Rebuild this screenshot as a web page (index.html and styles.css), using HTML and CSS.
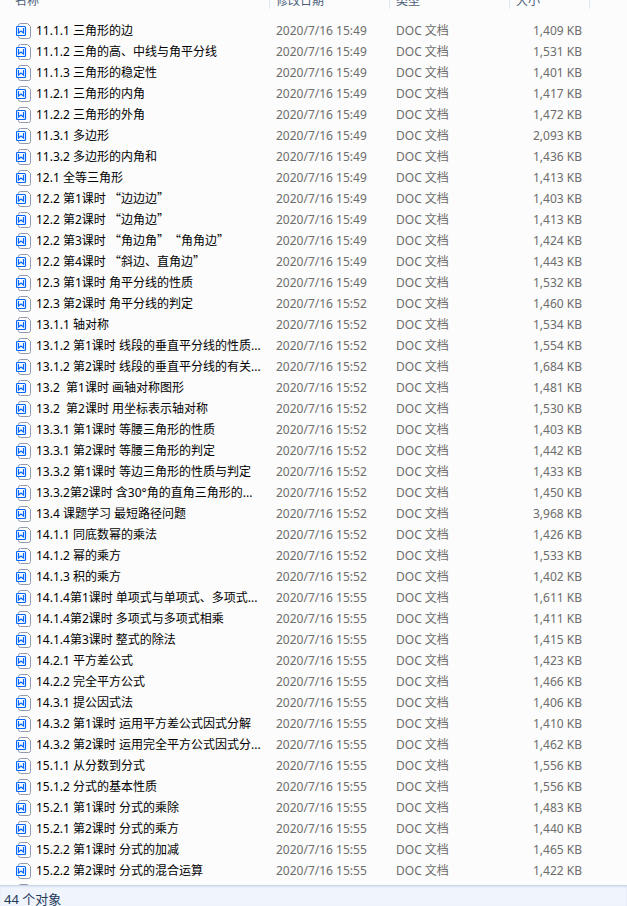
FILE: index.html
```html
<!DOCTYPE html>
<html lang="zh-CN">
<head>
    <meta charset="UTF-8">
    <meta name="viewport" content="width=device-width, initial-scale=1.0">
    <title>文件列表</title>
    <link rel="stylesheet" href="styles.css">
</head>
<body>
    <svg class="sprite" aria-hidden="true">
        <symbol id="doc-icon" viewBox="0 0 15 16">
            <path d="M2.5 2.5 Q2.5 .5 4.5 .5 H11.5 L14.5 3.5 V13.5 Q14.5 15.5 12.5 15.5 H4.5 Q2.5 15.5 2.5 13.5 Z" fill="#fff" stroke="#9299ad"/>
            <rect x=".5" y="3.5" width="9" height="9" rx="1" fill="#fff" stroke="#0066ff" stroke-width="1.2"/>
            <path d="M2.5 5 V10 L5 8 L7.5 10 V5" fill="none" stroke="#0066ff" stroke-width="1.2"/>
        </symbol>
    </svg>

    <div class="file-list">
        <table class="files">
            <colgroup>
                <col class="col-name">
                <col class="col-date">
                <col class="col-type">
                <col class="col-size">
                <col>
            </colgroup>
            <thead>
                <tr>
                    <th><div class="heading">名称</div></th>
                    <th><div class="heading">修改日期</div></th>
                    <th><div class="heading">类型</div></th>
                    <th><div class="heading">大小</div></th>
                    <td></td>
                </tr>
            </thead>
            <tbody id="file-rows"></tbody>
        </table>
    </div>

    <div class="status-bar">44 个对象</div>

    <script src="files.js"></script>
</body>
</html>
```
FILE: styles.css
```css
body {
    font-family: "Noto Sans", "Noto Sans CJK SC", sans-serif;
    font-size: 12px;
    margin: 0;
    height: 100vh;
    overflow: hidden;
    display: flex;
    flex-direction: column;
    background-color: #fcfcfc;
    color: #000;
}

.sprite {
    display: none;
}

.file-list {
    flex: 1;
    min-height: 0;
    overflow: hidden;
}

.files {
    width: 100%;
    table-layout: fixed;
    border-collapse: collapse;
}

.col-name {
    width: 270px;
}

.col-date,
.col-type {
    width: 120px;
}

.col-size {
    width: 80px;
}

th {
    padding: 0 0 11px;
    font-weight: normal;
    text-align: left;
}

/* scrolled header, only the lower part of the labels is visible */
.heading {
    display: flex;
    align-items: flex-end;
    height: 9px;
    padding-left: 6px;
    border-right: 1px solid #dfe9f5;
    line-height: 16px;
    color: #4c607a;
    overflow: hidden;
}

th:first-child .heading {
    padding-left: 15px;
}

tbody td {
    height: 21px;
    padding: 0 0 0 6px;
    line-height: 20px;
    white-space: pre;
    color: #6d6d6d;
}

tbody .name {
    padding-left: 16px;
    color: #000;
}

.file {
    display: flex;
    align-items: center;
    gap: 5px;
}

.doc-icon {
    flex: none;
    width: 15px;
    height: 16px;
}

.quote {
    font-family: "Noto Sans CJK SC", sans-serif;
    font-kerning: none;
    text-spacing-trim: space-all;
}

tbody .size {
    padding: 0 8px 0 0;
    text-align: right;
}

.status-bar {
    height: 20px;
    padding-left: 4px;
    border-top: 1px solid #c8d6e6;
    background-color: #f0f4fc;
    box-shadow: inset 0 1px 2px #d8e3f0;
    font-size: 13px;
    line-height: 26px;
    color: #1e395b;
}
```
FILE: files.js
```js
// name, time, size in KB
const files = [
    ['11.1.1 三角形的边', '15:49', '1,409'],
    ['11.1.2 三角的高、中线与角平分线', '15:49', '1,531'],
    ['11.1.3 三角形的稳定性', '15:49', '1,401'],
    ['11.2.1 三角形的内角', '15:49', '1,417'],
    ['11.2.2 三角形的外角', '15:49', '1,472'],
    ['11.3.1 多边形', '15:49', '2,093'],
    ['11.3.2 多边形的内角和', '15:49', '1,436'],
    ['12.1 全等三角形', '15:49', '1,413'],
    ['12.2 第1课时 “边边边”', '15:49', '1,403'],
    ['12.2 第2课时 “边角边”', '15:49', '1,413'],
    ['12.2 第3课时 “角边角”“角角边”', '15:49', '1,424'],
    ['12.2 第4课时 “斜边、直角边”', '15:49', '1,443'],
    ['12.3 第1课时 角平分线的性质', '15:49', '1,532'],
    ['12.3 第2课时 角平分线的判定', '15:52', '1,460'],
    ['13.1.1 轴对称', '15:52', '1,534'],
    ['13.1.2 第1课时 线段的垂直平分线的性质...', '15:52', '1,554'],
    ['13.1.2 第2课时 线段的垂直平分线的有关...', '15:52', '1,684'],
    ['13.2  第1课时 画轴对称图形', '15:52', '1,481'],
    ['13.2  第2课时 用坐标表示轴对称', '15:52', '1,530'],
    ['13.3.1 第1课时 等腰三角形的性质', '15:52', '1,403'],
    ['13.3.1 第2课时 等腰三角形的判定', '15:52', '1,442'],
    ['13.3.2 第1课时 等边三角形的性质与判定', '15:52', '1,433'],
    ['13.3.2第2课时 含30°角的直角三角形的...', '15:52', '1,450'],
    ['13.4 课题学习 最短路径问题', '15:52', '3,968'],
    ['14.1.1 同底数幂的乘法', '15:52', '1,426'],
    ['14.1.2 幂的乘方', '15:52', '1,533'],
    ['14.1.3 积的乘方', '15:52', '1,402'],
    ['14.1.4第1课时 单项式与单项式、多项式...', '15:55', '1,611'],
    ['14.1.4第2课时 多项式与多项式相乘', '15:55', '1,411'],
    ['14.1.4第3课时 整式的除法', '15:55', '1,415'],
    ['14.2.1 平方差公式', '15:55', '1,423'],
    ['14.2.2 完全平方公式', '15:55', '1,466'],
    ['14.3.1 提公因式法', '15:55', '1,406'],
    ['14.3.2 第1课时 运用平方差公式因式分解', '15:55', '1,410'],
    ['14.3.2 第2课时 运用完全平方公式因式分...', '15:55', '1,462'],
    ['15.1.1 从分数到分式', '15:55', '1,556'],
    ['15.1.2 分式的基本性质', '15:55', '1,556'],
    ['15.2.1 第1课时 分式的乘除', '15:55', '1,483'],
    ['15.2.1 第2课时 分式的乘方', '15:55', '1,440'],
    ['15.2.2 第1课时 分式的加减', '15:55', '1,465'],
    ['15.2.2 第2课时 分式的混合运算', '15:55', '1,422']
];

const icon = '<svg class="doc-icon" aria-hidden="true"><use href="#doc-icon"/></svg>';

// Chinese quotes take a full character cell
function formatName(name) {
    return name.replace(/[“”]+/g, '<span class="quote">$&</span>');
}

let rows = files.map(([name, time, size]) => `
    <tr>
        <td class="name"><div class="file">${icon}<span>${formatName(name)}</span></div></td>
        <td>2020/7/16 ${time}</td>
        <td>DOC 文档</td>
        <td class="size">${size} KB</td>
        <td></td>
    </tr>`).join('');

// next row, cut off by the status bar
rows += `<tr><td class="name"><div class="file">${icon}</div></td><td colspan="4"></td></tr>`;

document.getElementById('file-rows').innerHTML = rows;
```
